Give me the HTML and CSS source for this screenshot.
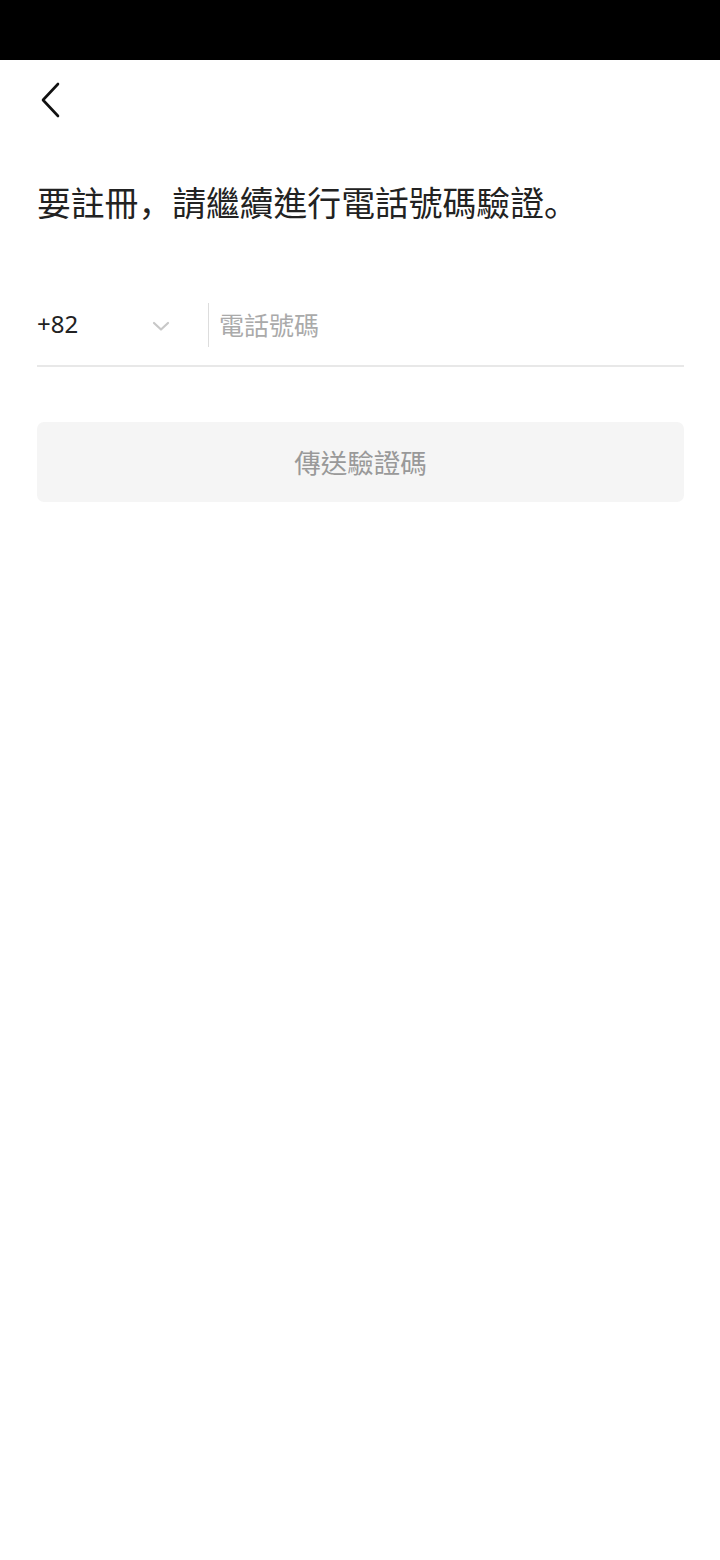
FILE: index.html
```html
<!DOCTYPE html>
<html lang="zh-Hant">
<head>
<meta charset="utf-8">
<link rel="stylesheet" href="styles.css">
</head>
<body>
<div class="status"></div>
<div class="page">
  <div class="nav">
    <svg class="back" width="24" height="36" viewBox="0 0 24 36"><path d="M19 2 L4 18 L19 34" fill="none" stroke="#111" stroke-width="2.6" stroke-linecap="round" stroke-linejoin="round"/></svg>
  </div>
  <h1 class="title">要註冊<span class="punct" lang="ja">，</span>請繼續進行電話號碼驗證<span class="punct" lang="ja">。</span></h1>
  <div class="phone-row">
    <div class="country">
      <span class="code">+82</span>
      <svg class="chev" width="18" height="12" viewBox="0 0 18 12"><path d="M2 3 L9 9.5 L16 3" fill="none" stroke="#c8c8c8" stroke-width="2.2" stroke-linecap="round" stroke-linejoin="round"/></svg>
    </div>
    <div class="sep"></div>
    <div class="placeholder">電話號碼</div>
  </div>
  <div class="send">傳送驗證碼</div>
</div>
</body>
</html>
```
FILE: styles.css
```css
html, body { margin: 0; padding: 0; background: #fff; }
body { font-family: "Noto Sans CJK TC", "Noto Sans", sans-serif; width: 720px; height: 1560px; }
.status { height: 60px; background: #000; }
.page { padding: 0 36px 0 37px; }
.nav { height: 70px; display: flex; align-items: center; padding-left: 2px; }
.back { display: block; margin-top: 10px; }
.title { margin: 48px 0 0 0; font-size: 33.8px; font-weight: 400; color: #222; line-height: 48px; }
.punct { font-family: "Noto Sans CJK JP", "Noto Sans CJK SC", sans-serif; }
.phone-row { margin-top: 75px; display: flex; align-items: center; height: 64px; border-bottom: 2px solid #e8e8e8; }
.country { width: 171px; display: flex; align-items: center; justify-content: space-between; box-sizing: border-box; height: 44px; margin-top: -16px; }
.code { font-size: 24px; color: #222; font-family: "Noto Sans", "Noto Sans CJK TC", sans-serif; margin-top: -4px; }
.chev { margin-right: 38px; margin-top: 2px; }
.sep { width: 1px; height: 44px; background: #ddd; margin-top: -16px; }
.placeholder { margin-left: 10px; font-size: 25px; color: #aaa; margin-top: -18px; }
.send { margin-top: 55px; height: 80px; background: #f5f5f5; border-radius: 7px; display: flex; align-items: center; justify-content: center; font-size: 26.5px; color: #999; padding-bottom: 2px; box-sizing: border-box; }
```
